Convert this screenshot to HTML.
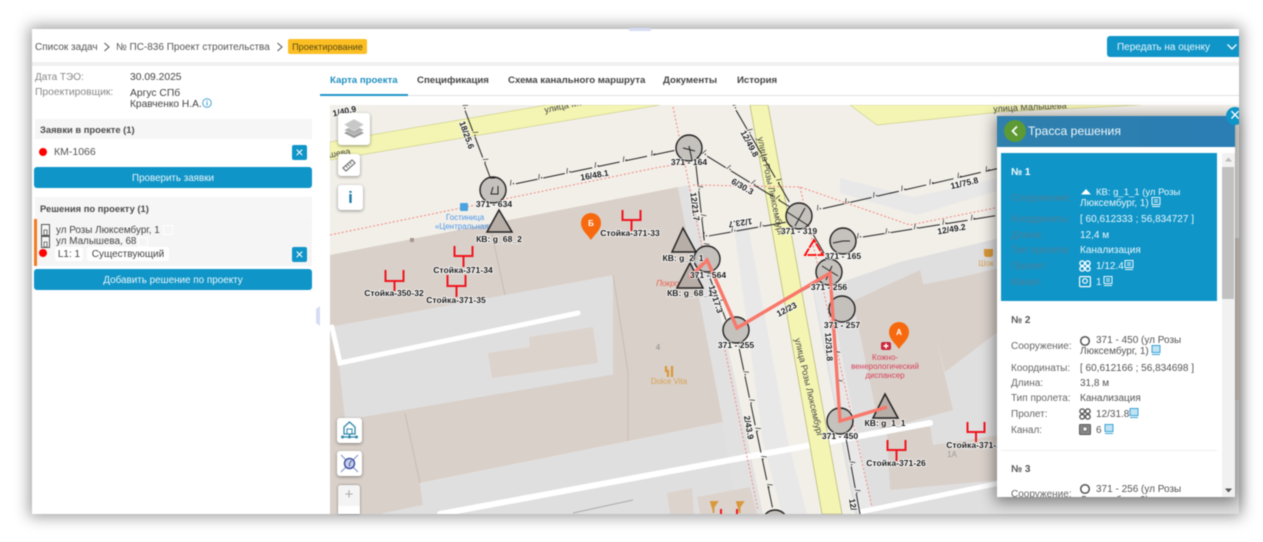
<!DOCTYPE html>
<html lang="ru"><head><meta charset="utf-8"><title>Трасса решения</title>
<style>
html,body{margin:0;padding:0;background:#fff;width:1263px;height:542px;overflow:hidden}
body{font-family:"Liberation Sans","DejaVu Sans",sans-serif;color:#555}
#root{position:absolute;left:0;top:0;width:1263px;height:542px;filter:blur(.45px)}
#win{position:absolute;left:32px;top:29px;width:1207px;height:485px;background:#fff;box-shadow:0 0 14px 3px rgba(0,0,0,.38)}
.a{position:absolute;white-space:nowrap}
.b{background:#1095c8;color:#e8f6fb;text-align:center;border-radius:3px}
.sec{background:#f6f6f6;font-weight:700;color:#4a4a4a;font-size:9.4px;left:35px;width:272px;padding-left:5px}
.x{background:#1095c8;width:15px;height:15px;border-radius:2px;color:#fff;text-align:center;font-size:14px;line-height:14px}
.dot{width:8px;height:8px;border-radius:50%;background:#f00}
.tab{top:75px;font-size:9.65px;font-weight:700;color:#444}
.chip{background:#fff;border-radius:3px;font-size:10px;line-height:15px;height:14px;text-align:center;color:#444}
.ctl{background:#fff;border-radius:3px;box-shadow:0 1px 3px rgba(0,0,0,.4)}
.lbl{left:1011px;font-size:10px;color:#666;transform:translateY(1px)}
.val{left:1080px;font-size:10px;color:#555;transform:translateY(1px)}
.on{color:#e9f7fc}.off{color:#4c7f98}
svg text{font-family:"Liberation Sans",sans-serif}
.cable{fill:none;stroke:#222;stroke-width:1;stroke-dasharray:22 6;stroke-dashoffset:22}
.m{font-size:6.5px;fill:#222;word-spacing:21.7px;font-weight:700;font-family:"DejaVu Sans",sans-serif!important}
.t{font-size:8.6px;font-weight:700;fill:#1a1a1a;text-anchor:middle;paint-order:stroke;stroke:#fff;stroke-width:1.6px;stroke-opacity:.85}
.n{fill:#c2bfba;stroke:#222;stroke-width:1.4;fill-opacity:.95}
.tr{fill:#b8aea8;stroke:#222;stroke-width:1.5}
.ant{fill:none;stroke:#f0141e;stroke-width:2}
.dots{fill:none;stroke:#ef9188;stroke-width:1.1;stroke-dasharray:2 2}
.st{font-size:8px;fill:#333;text-anchor:middle}
.rd{font-size:9px;fill:#444;text-anchor:middle}
</style></head><body>
<div id="root">
<div id="win"></div>

<svg class="a" style="left:0;top:0" width="1263" height="542" viewBox="0 0 1263 542">
<defs><clipPath id="mc"><rect x="330" y="105" width="909" height="409"/></clipPath></defs>
<g clip-path="url(#mc)">
<rect x="330" y="105" width="909" height="409" fill="#f2efe9"/>
<!-- buildings and yards -->
<polygon points="330,255 678,187 723,422 420,483 423,505 380,514 330,514" fill="#d9d0c9"/>
<polygon points="335,326 505,295 613,275 628,372 345,420" fill="#e0dfdf"/>
<polygon points="488,353 530,347 529,337 593,327 598,363 492,378" fill="#dcd3cc"/>
<polygon points="613,275 678,262 723,422 628,441 613,372" fill="#d9d0c9"/>
<path d="M505,295 L490,225 M405,413 L420,483 M613,275 L628,372 L628,441" stroke="#c9bdb4" fill="none"/>
<polygon points="678,187 690,185 733,370 763,514 738,514 723,422" fill="#e2e1e1"/>
<polygon points="423,505 420,483 723,422 738,514 380,514" fill="#e0dfdf"/>
<polygon points="667,493 692,488 694,514 670,514" fill="#dcd3cc"/>
<polygon points="697,497 750,487 757,514 700,514" fill="#dcd3cc"/>
<path d="M573,513 L633,500" stroke="#aaa" fill="none"/>
<polygon points="733,220 747,220 788,442 807,514 782,514 763,442" fill="#e9e8e8"/>
<polygon points="813,292 900,262 1000,238 1240,238 1240,514 855,514" fill="#e0dfdf"/>
<polygon points="853,301 920,270 953,410 880,430" fill="#d9d0c9"/>
<polygon points="920,285 957,278 1000,268 1000,330 945,372 934,330" fill="#d9d0c9"/>
<polygon points="887,433 930,425 933,445 1000,435 1000,480 890,490" fill="#d9d0c9"/>
<polygon points="840,178 913,197 1000,178 1000,190 917,215 840,193" fill="#e9e8e8"/>
<polygon points="1000,238 1240,238 1240,400 1000,400" fill="#d9d0c9"/>
<!-- pale strip -->
<polygon points="813,287 828,285 872,510 858,514" fill="#e9e8e8"/>
<!-- white roads -->
<path d="M332,327 L340,363 L578,313" fill="none" stroke="#fff" stroke-width="5" stroke-linecap="round"/>
<path d="M440,514 L930,423" fill="none" stroke="#fff" stroke-width="6" stroke-linecap="round"/>
<path d="M860,512 L1000,483" fill="none" stroke="#fff" stroke-width="5"/>
<!-- yellow roads -->
<polygon points="330,142 547,105 660,105 330,160" fill="#f4f5b3" stroke="#cfd08d" stroke-width=".7"/>
<polygon points="850,105 877,125 1000,112 1140,105" fill="#f4f5b3" stroke="#cfd08d" stroke-width=".7"/>
<polygon points="750,105 768,105 842,514 822,514" fill="#f4f5b3" stroke="#b9bb78" stroke-width=".8"/>
<text class="rd" transform="translate(768,187) rotate(78)">улица Розы Люксембург</text>
<text class="rd" transform="translate(806,388) rotate(77)">улица Розы Люксембург</text>
<text class="rd" transform="translate(545,113) rotate(-12)" style="text-anchor:start">улица Малышева</text>
<text class="rd" transform="translate(1030,110) rotate(-3)">улица Малышева</text>
<text class="rd" transform="translate(340,156) rotate(-10)">шева</text>
<!-- boundary dotted -->
<path class="dots" d="M330,235 L660,167 L690,163"/>
<path class="dots" d="M673,107 L705,262"/>
<path class="dots" d="M693,185 L800,187 L910,225 L1000,207"/>
<path class="dots" d="M800,187 L833,333 L872,507"/>
<path class="dots" d="M725,350 L758,510"/>
<!-- POI -->
<rect x="460" y="203" width="8" height="8" rx="1" fill="#4aa3e0"/>
<text class="st" x="465" y="220" style="fill:#4f97e6">Гостиница</text>
<text class="st" x="464" y="229" style="fill:#4f97e6">«Центральная»</text>
<rect x="410" y="238" width="4" height="4" fill="#a8988c"/>
<text class="st" x="678" y="286" style="fill:#e8604c;font-style:italic">Покровский</text>
<text class="st" x="669" y="384" style="fill:#d9a050">Dolce Vita</text>
<text class="st" x="658" y="350" style="fill:#8a8a8a">4</text>
<path d="M666,366v5h2v6M672,366v11" stroke="#d9983a" stroke-width="2.2" fill="none"/>
<text class="st" x="885" y="360" style="fill:#d6445a">Кожно-</text>
<text class="st" x="885" y="369" style="fill:#d6445a">венерологический</text>
<text class="st" x="885" y="378" style="fill:#d6445a">диспансер</text>
<rect x="881" y="342" width="10" height="8" rx="2" fill="#c8263c"/>
<path d="M886,343.500v5M883.500,346h5" stroke="#fff" stroke-width="1.400"/>
<text class="st" x="952" y="457" style="fill:#9a9a9a">1А</text>
<text class="st" x="986" y="266" style="fill:#d9a050">Шок</text>
<path d="M984,249h9v5q0,3 -3,3h-3q-3,0 -3,-3z" fill="#d9983a"/>
<path d="M710,502h7l-3.500,5v6M736,502h7l-3.500,5v6" stroke="#d9983a" stroke-width="1.800" fill="#d9983a"/>
<path d="M721,509v5M737,509v5" stroke="#f0141e" stroke-width="2"/>
<!-- cables -->
<path id="c1" class="cable" d="M463,105 L490,177"/><text class="m"><textPath href="#c1">/. /. /. /.</textPath></text>
<path id="c2" class="cable" d="M510,185 L677,150"/><text class="m"><textPath href="#c2">/. /. /. /. /. /. /. /.</textPath></text>
<path id="c3" class="cable" d="M702,153 L790,207"/><text class="m"><textPath href="#c3">/. /. /. /. /.</textPath></text>
<path id="c4" class="cable" d="M733,105 L790,203"/><text class="m"><textPath href="#c4">/. /. /. /. /. /.</textPath></text>
<path id="c5" class="cable" d="M695,157 L705,247"/><text class="m"><textPath href="#c5">/. /. /. /.</textPath></text>
<path id="c6" class="cable" d="M703,237 L787,222"/><text class="m"><textPath href="#c6">/. /. /. /.</textPath></text>
<path id="c7" class="cable" d="M817,210 L1000,168"/><text class="m"><textPath href="#c7">/. /. /. /. /. /. /. /.</textPath></text>
<path id="c8" class="cable" d="M857,238 L1000,215"/><text class="m"><textPath href="#c8">/. /. /. /. /. /.</textPath></text>
<path id="c9" class="cable" d="M708,273 L726,320"/><text class="m"><textPath href="#c9">/. /. /.</textPath></text>
<path id="c10" class="cable" d="M738,343 L773,510"/><text class="m"><textPath href="#c10">/. /. /. /. /. /. /.</textPath></text>
<path id="c11" class="cable" d="M845,433 L860,514"/><text class="m"><textPath href="#c11">/. /. /. /.</textPath></text>
<path id="c12" class="cable" d="M833,322 L840,410"/><text class="m"><textPath href="#c12">/. /. /. /.</textPath></text>
<path class="cable" d="M810,229 L828,260 M747,322 L825,278"/>
<!-- cable labels -->
<text class="t" transform="translate(464,136) rotate(70)">18/25.6</text>
<text class="t" transform="translate(595,178) rotate(-10)">16/48.1</text>
<text class="t" transform="translate(741,189) rotate(30)">6/30.3</text>
<text class="t" transform="translate(747,145) rotate(62)">12/49.8</text>
<text class="t" transform="translate(692,207) rotate(83)">12/21.7</text>
<text class="t" transform="translate(740,220) rotate(172)">1/23.7</text>
<text class="t" transform="translate(965,186) rotate(-13)">11/75.8</text>
<text class="t" transform="translate(952,232) rotate(-10)">12/49.2</text>
<text class="t" transform="translate(713,300) rotate(72)">12/17.3</text>
<text class="t" transform="translate(788,312) rotate(-28)">12/23</text>
<text class="t" transform="translate(826,347) rotate(86)">12/31.8</text>
<text class="t" transform="translate(746,428) rotate(80)">2/43.9</text>
<text class="t" transform="translate(850,505) rotate(80)">12/</text>
<text class="t" transform="translate(345,114) rotate(-12)">1/40.9</text>
<!-- nodes -->
<g>
<circle class="n" cx="493" cy="190" r="13"/><path d="M490,178h5M493,187l-2,7h7v-8" stroke="#222" fill="none"/>
<circle class="n" cx="689" cy="148" r="13"/><path d="M683,148l12,3M689,146l3,14" stroke="#222" fill="none"/>
<circle class="n" cx="799" cy="216" r="13"/><path d="M787,212l22,14M795,226l10,-18" stroke="#222" fill="none"/>
<circle class="n" cx="843" cy="241" r="13"/><path d="M843,241h7M833,243l10,-2" stroke="#222" fill="none"/>
<circle class="n" cx="829" cy="272" r="13"/><path d="M822,266l16,10M826,280l6,-14" stroke="#222" fill="none"/>
<circle class="n" cx="842" cy="309" r="13"/>
<circle class="n" cx="707" cy="259" r="13"/>
<circle class="n" cx="736" cy="330" r="13"/>
<circle class="n" cx="840" cy="421" r="13"/>
<circle class="n" cx="775" cy="523" r="13"/>
<polygon class="tr" points="499,210 487,232 512,232"/>
<polygon class="tr" points="683,228 672,252 696,252"/>
<polygon class="tr" points="690,263 677,288 703,288"/>
<polygon class="tr" points="885,394 873,418 898,418"/>
<polygon points="814,240 805,255 823,255" fill="none" stroke="#f00" stroke-width="1.800" stroke-dasharray="9 1"/>
</g>
<!-- route -->
<path d="M689,278 L707,260 L737,328 L830,273 L840,421 L887,407" fill="none" stroke="#f8776a" stroke-width="3.400" stroke-linejoin="miter"/>
<!-- antennas -->
<path class="ant" d="M622.500,210v10h18v-10M631.500,220v11"/>
<path class="ant" d="M454.500,246v10h18v-10M463.500,256v11"/>
<path class="ant" d="M385.500,270v11h18v-11M394.500,281v10"/>
<path class="ant" d="M447.500,275v11h18v-11M456.500,286v11"/>
<path class="ant" d="M887.500,440v10h18v-10M896.500,450v11"/>
<path class="ant" d="M967.500,422v10h17v-10M976,432v10"/>
<!-- node labels -->
<text class="t" x="494" y="207">371 - 634</text>
<text class="t" x="499" y="242">КВ: g_68_2</text>
<text class="t" x="689" y="165">371 - 164</text>
<text class="t" x="799" y="234">371 - 319</text>
<text class="t" x="843" y="259">371 - 165</text>
<text class="t" x="829" y="290">371 - 256</text>
<text class="t" x="842" y="328">371 - 257</text>
<text class="t" x="708" y="278">371 - 564</text>
<text class="t" x="736" y="348">371 - 255</text>
<text class="t" x="840" y="439">371 - 450</text>
<text class="t" x="683" y="261">КВ: g_2_1</text>
<text class="t" x="690" y="296">КВ: g_68_1</text>
<text class="t" x="885" y="426">КВ: g_1_1</text>
<text class="t" x="630" y="236">Стойка-371-33</text>
<text class="t" x="463" y="273">Стойка-371-34</text>
<text class="t" x="394" y="296">Стойка-350-32</text>
<text class="t" x="456" y="303">Стойка-371-35</text>
<text class="t" x="896" y="466">Стойка-371-26</text>
<text class="t" x="976" y="448">Стойка-371-27</text>
<!-- pins -->
<path d="M591,240 C587,234 581,230 581,223 A10,10 0 1 1 601,223 C601,230 595,234 591,240Z" fill="#f7690f"/>
<text x="591" y="226" style="font-size:8px;fill:#fff;text-anchor:middle;font-weight:700">Б</text>
<path d="M899,349 C895,343 889,339 889,332 A10,10 0 1 1 909,332 C909,339 903,343 899,349Z" fill="#f7690f"/>
<text x="899" y="335" style="font-size:8px;fill:#fff;text-anchor:middle;font-weight:700">А</text>
</g>
<!-- window chrome bits -->
<rect x="32" y="62" width="1207" height="4" fill="#f0f0f0"/>
<rect x="629" y="28" width="22" height="3" rx="1" fill="#d5dcf3"/>
<path d="M320,306 L316,309 V323 L320,326Z" fill="#d5dcf3"/>
</svg>

<!-- Top bar -->
<div class="a" style="left:35px;top:42px;font-size:10px;color:#555">Список задач</div>
<svg class="a" style="left:103px;top:42px" width="8" height="10"><path d="M1.500,1L6,5L1.500,9" fill="none" stroke="#555"/></svg>
<div class="a" style="left:116px;top:42px;font-size:10px;color:#555">№ ПС-836 Проект строительства</div>
<svg class="a" style="left:276px;top:42px" width="8" height="10"><path d="M1.500,1L6,5L1.500,9" fill="none" stroke="#555"/></svg>
<div class="a" style="left:288px;top:39px;width:79px;height:15px;background:#fbbf24;border-radius:2px;text-align:center;font-size:9.2px;line-height:16px;color:#5a4a10">Проектирование</div>
<div class="a b" style="left:1107px;top:36px;width:132px;height:21px;border-radius:3px 0 0 3px"></div>
<div class="a" style="left:1107px;top:37px;width:113px;text-align:center;font-size:10px;line-height:21px;color:#e8f6fb">Передать на оценку</div>
<svg class="a" style="left:1226px;top:43px" width="12" height="8"><path d="M1.500,1.500L6,6L10.500,1.500" fill="none" stroke="#fff" stroke-width="1.300"/></svg>

<!-- Left panel -->
<div class="a" style="left:35px;top:72px;font-size:10px;color:#888">Дата ТЭО:</div>
<div class="a" style="left:130px;top:72px;font-size:10.3px;color:#444">30.09.2025</div>
<div class="a" style="left:35px;top:87px;font-size:10.3px;color:#888">Проектировщик:</div>
<div class="a" style="left:130px;top:88px;font-size:10.3px;color:#444">Аргус СПб</div>
<div class="a" style="left:130px;top:99px;font-size:10.2px;color:#444">Кравченко Н.А.</div>
<svg class="a" style="left:202px;top:98px" width="10" height="10"><circle cx="5" cy="5" r="4.300" fill="none" stroke="#3a9bd0" stroke-width=".9"/><path d="M5,4v3.500M5,2.300v1" stroke="#3a9bd0"/></svg>

<div class="a sec" style="top:119px;height:20px;line-height:22px">Заявки в проекте (1)</div>
<div class="a dot" style="left:39px;top:148px"></div>
<div class="a" style="left:54px;top:146px;font-size:10.5px;color:#555">КМ-1066</div>
<div class="a x" style="left:292px;top:145px">×</div>
<div class="a b" style="left:34px;top:167px;width:278px;height:21px;font-size:9.8px;line-height:23px">Проверить заявки</div>

<div class="a sec" style="top:197px;height:22px;line-height:24px">Решения по проекту (1)</div>
<div class="a" style="left:34px;top:219px;width:278px;height:47px;background:#f5f5f5"></div>
<div class="a" style="left:34px;top:219px;width:3px;height:47px;background:#f47a20"></div>
<svg class="a" style="left:40px;top:224px" width="11" height="24"><path d="M1.500,.5h8v11h-8zM1.500,12.500h8v11h-8z" fill="none" stroke="#555"/><path d="M4,6h3v5h-3zM4,18h3v5h-3z" fill="none" stroke="#555" stroke-width=".8"/></svg>
<div class="a" style="left:56px;top:225px;font-size:9.9px;color:#444">ул Розы Люксембург, 1</div>
<div class="a" style="left:56px;top:236px;font-size:9.9px;color:#444">ул Малышева, 68</div>
<div class="a" style="left:163px;top:225px;width:8px;height:8px;border:1px solid #fff"></div>
<div class="a" style="left:138px;top:237px;width:8px;height:8px;border:1px solid #fff"></div>
<div class="a dot" style="left:39px;top:249px"></div>
<div class="a chip" style="left:55px;top:247px;width:28px">L1: 1</div>
<div class="a chip" style="left:87px;top:247px;width:82px">Существующий</div>
<div class="a x" style="left:292px;top:247px">×</div>
<div class="a b" style="left:34px;top:269px;width:278px;height:21px;font-size:9.9px;line-height:23px">Добавить решение по проекту</div>

<!-- Tabs -->
<div class="a" style="left:320px;top:95px;width:919px;height:1px;background:#e2e2e2"></div>
<div class="a" style="left:320px;top:94px;width:88px;height:2px;background:#1f95c8"></div>
<div class="a tab" style="left:330px;color:#1f8fc0">Карта проекта</div>
<div class="a tab" style="left:417px">Спецификация</div>
<div class="a tab" style="left:508px">Схема канального маршрута</div>
<div class="a tab" style="left:663px">Документы</div>
<div class="a tab" style="left:737px">История</div>

<!-- Map controls -->
<div class="a ctl" style="left:338px;top:113px;width:32px;height:32px"></div>
<svg class="a" style="left:343px;top:118px" width="22" height="22"><path d="M11,10L21,15L11,20L1,15Z" fill="#999"/><path d="M11,7L21,12L11,17L1,12Z" fill="#b0b0b0" stroke="#fff" stroke-width=".4"/><path d="M11,1L21,6.500L11,13L1,6.500Z" fill="#c8c8c8" stroke="#fff" stroke-width=".4"/></svg>
<div class="a ctl" style="left:338px;top:154px;width:22px;height:22px"></div>
<svg class="a" style="left:342px;top:158px" width="14" height="14"><path d="M1,10L10,2L13,5L4,13Z" fill="none" stroke="#777" stroke-width="1.200"/><path d="M4,8l1.500,1.500M6,6.500l1.500,1.500M8,4.500l1.500,1.500" stroke="#777"/></svg>
<div class="a ctl" style="left:338px;top:185px;width:25px;height:25px;text-align:center;font-size:17px;line-height:25px;font-weight:700;color:#1f7ca8">i</div>
<div class="a ctl" style="left:337px;top:418px;width:25px;height:25px"></div>
<svg class="a" style="left:340px;top:421px" width="19" height="19"><path d="M9.500,1L15,6V13H4V6Z" fill="none" stroke="#2f86a8" stroke-width="1.300"/><path d="M7,8h5v5h-5z" fill="none" stroke="#2f86a8"/><path d="M2,16H17M9.500,13v3" stroke="#2f86a8" stroke-width="1.300"/><circle cx="2.500" cy="16" r="1.500" fill="#2f86a8"/><circle cx="16.500" cy="16" r="1.500" fill="#2f86a8"/><circle cx="9.500" cy="16" r="1.500" fill="#2f86a8"/></svg>
<div class="a ctl" style="left:337px;top:451px;width:25px;height:25px"></div>
<svg class="a" style="left:340px;top:454px" width="19" height="19"><path d="M1,1L18,18M18,1L1,18" stroke="#7d8fc4"/><circle cx="9.500" cy="9.500" r="5" fill="#c9d1ea" stroke="#3f55a5" stroke-width="1.500"/><path d="M9.500,9.500l2,-3M9.500,9.500v3" stroke="#3f55a5"/></svg>
<div class="a" style="left:338px;top:485px;width:22px;height:29px;background:#fff;border-radius:3px 3px 0 0;box-shadow:0 0 2px rgba(0,0,0,.5)"></div>
<div class="a" style="left:338px;top:485px;width:22px;height:21px;background:#f4f4f4;text-align:center;font-size:15px;line-height:20px;color:#aaa;border-radius:3px 3px 0 0">+</div>

<!-- Right panel -->
<div class="a" style="left:997px;top:116px;width:238px;height:381px;background:#fff;box-shadow:0 3px 14px 2px rgba(0,0,0,.45)"></div>
<div class="a" style="left:997px;top:116px;width:238px;height:31px;background:linear-gradient(90deg,#2f80ad,#2a7eb4)"></div>
<div class="a" style="left:1004px;top:120px;width:22px;height:22px;border-radius:50%;background:#5d9a33"></div>
<svg class="a" style="left:1010px;top:125px" width="10" height="12"><path d="M7,1.500L2.500,6L7,10.500" fill="none" stroke="#fff" stroke-width="1.700"/></svg>
<div class="a" style="left:1028px;top:124px;font-size:12.2px;color:#eef7fb">Трасса решения</div>
<div class="a" style="left:1226px;top:107px;width:13px;height:18px;overflow:hidden"><div style="width:18px;height:18px;border-radius:50%;background:#1095c8;color:#fff;font-size:18px;line-height:17px;text-align:center">×</div></div>

<div class="a" style="left:1001px;top:153px;width:216px;height:148px;background:#1095c8"></div>
<div class="a" style="left:1222px;top:153px;width:13px;height:344px;background:#f1f1f1"></div>
<div class="a" style="left:1222px;top:167px;width:12px;height:132px;background:#c1c1c1"></div>
<svg class="a" style="left:1224px;top:157px" width="9" height="5"><path d="M1,4.500L4.500,.5L8,4.500Z" fill="#bbb"/></svg>
<svg class="a" style="left:1224px;top:488px" width="9" height="5"><path d="M1,.5L4.500,4.500L8,.5Z" fill="#555"/></svg>

<div class="a on" style="left:1011px;top:167px;font-size:10px;font-weight:700;color:#fff">№ 1</div>
<div class="a lbl off" style="top:192px">Сооружение:</div>
<svg class="a" style="left:1080px;top:188px" width="12" height="8"><path d="M6,1L11,6.500H1Z" fill="#fff"/></svg>
<div class="a val on" style="left:1096px;top:186px;font-size:9.5px">КВ: g_1_1 (ул Розы</div>
<div class="a val on" style="top:197px">Люксембург, 1)</div>
<svg class="a" style="left:1151px;top:197px" width="10" height="11"><path d="M1,.5h8v7h-8zM1,9.500h8M3,3h4M3,5h4" fill="none" stroke="#e9f7fc"/></svg>
<div class="a lbl off" style="top:213px">Координаты:</div>
<div class="a val on" style="top:213px">[ 60,612333 ; 56,834727 ]</div>
<div class="a lbl off" style="top:229px">Длина:</div>
<div class="a val on" style="top:229px">12,4 м</div>
<div class="a lbl off" style="top:244px">Тип пролета:</div>
<div class="a val on" style="top:244px">Канализация</div>
<div class="a lbl off" style="top:260px">Пролет:</div>
<svg class="a" style="left:1079px;top:260px" width="12" height="12"><g fill="none" stroke="#fff" stroke-width="1.400"><circle cx="3.200" cy="3.200" r="2.300"/><circle cx="8.800" cy="3.200" r="2.300"/><circle cx="3.200" cy="8.800" r="2.300"/><circle cx="8.800" cy="8.800" r="2.300"/></g></svg>
<div class="a val on" style="left:1096px;top:260px">1/12.4</div>
<svg class="a" style="left:1124px;top:260px" width="10" height="11"><path d="M1,.5h8v7h-8zM1,9.500h8M3,3h4M3,5h4" fill="none" stroke="#e9f7fc"/></svg>
<div class="a lbl off" style="top:276px">Канал:</div>
<svg class="a" style="left:1079px;top:276px" width="12" height="12"><rect x=".6" y=".6" width="10.800" height="10" rx="1" fill="none" stroke="#fff" stroke-width="1.200"/><circle cx="6" cy="5" r="2.300" fill="none" stroke="#fff" stroke-width="1.200"/></svg>
<div class="a val on" style="left:1096px;top:276px">1</div>
<svg class="a" style="left:1103px;top:276px" width="10" height="11"><path d="M1,.5h8v7h-8zM1,9.500h8M3,3h4M3,5h4" fill="none" stroke="#e9f7fc"/></svg>

<div class="a" style="left:1011px;top:315px;font-size:10px;font-weight:700;color:#555">№ 2</div>
<div class="a lbl" style="top:340px">Сооружение:</div>
<svg class="a" style="left:1079px;top:335px" width="12" height="12"><circle cx="6" cy="6" r="4.300" fill="none" stroke="#555" stroke-width="1.500"/></svg>
<div class="a val" style="left:1096px;top:334px">371 - 450 (ул Розы</div>
<div class="a val" style="top:345px">Люксембург, 1)</div>
<svg class="a" style="left:1151px;top:345px" width="10" height="11"><path d="M1,.5h8v7h-8z" fill="#bfe3f3" stroke="#3aa3d6"/><path d="M1,9.500h8" stroke="#3aa3d6"/></svg>
<div class="a lbl" style="top:362px">Координаты:</div>
<div class="a val" style="top:362px">[ 60,612166 ; 56,834698 ]</div>
<div class="a lbl" style="top:377px">Длина:</div>
<div class="a val" style="top:377px">31,8 м</div>
<div class="a lbl" style="top:392px">Тип пролета:</div>
<div class="a val" style="top:392px">Канализация</div>
<div class="a lbl" style="top:408px">Пролет:</div>
<svg class="a" style="left:1079px;top:408px" width="12" height="12"><g fill="none" stroke="#555" stroke-width="1.400"><circle cx="3.200" cy="3.200" r="2.300"/><circle cx="8.800" cy="3.200" r="2.300"/><circle cx="3.200" cy="8.800" r="2.300"/><circle cx="8.800" cy="8.800" r="2.300"/></g></svg>
<div class="a val" style="left:1096px;top:408px">12/31.8</div>
<svg class="a" style="left:1129px;top:408px" width="10" height="11"><path d="M1,.5h8v7h-8z" fill="#bfe3f3" stroke="#3aa3d6"/><path d="M1,9.500h8" stroke="#3aa3d6"/></svg>
<div class="a lbl" style="top:424px">Канал:</div>
<svg class="a" style="left:1079px;top:424px" width="12" height="12"><rect x=".5" y=".5" width="11" height="10" rx="1" fill="#888" stroke="#555"/><circle cx="6" cy="5" r="2.300" fill="#eee" stroke="#555" stroke-width=".8"/></svg>
<div class="a val" style="left:1096px;top:424px">6</div>
<svg class="a" style="left:1104px;top:424px" width="10" height="11"><path d="M1,.5h8v7h-8z" fill="#bfe3f3" stroke="#3aa3d6"/><path d="M1,9.500h8" stroke="#3aa3d6"/></svg>

<div class="a" style="left:1001px;top:450px;width:216px;height:1px;background:#efefef"></div>
<div class="a" style="left:1011px;top:464px;font-size:10px;font-weight:700;color:#555">№ 3</div>
<div class="a" style="left:1001px;top:480px;width:216px;height:17px;overflow:hidden">
<div class="a lbl" style="left:10px;top:8px">Сооружение:</div>
<svg class="a" style="left:78px;top:3px" width="12" height="12"><circle cx="6" cy="6" r="4.300" fill="none" stroke="#555" stroke-width="1.500"/></svg>
<div class="a val" style="left:95px;top:3px">371 - 256 (ул Розы</div>
<div class="a val" style="left:79px;top:14px">Люксембург, 2)</div>
</div>
</div>
</body></html>
